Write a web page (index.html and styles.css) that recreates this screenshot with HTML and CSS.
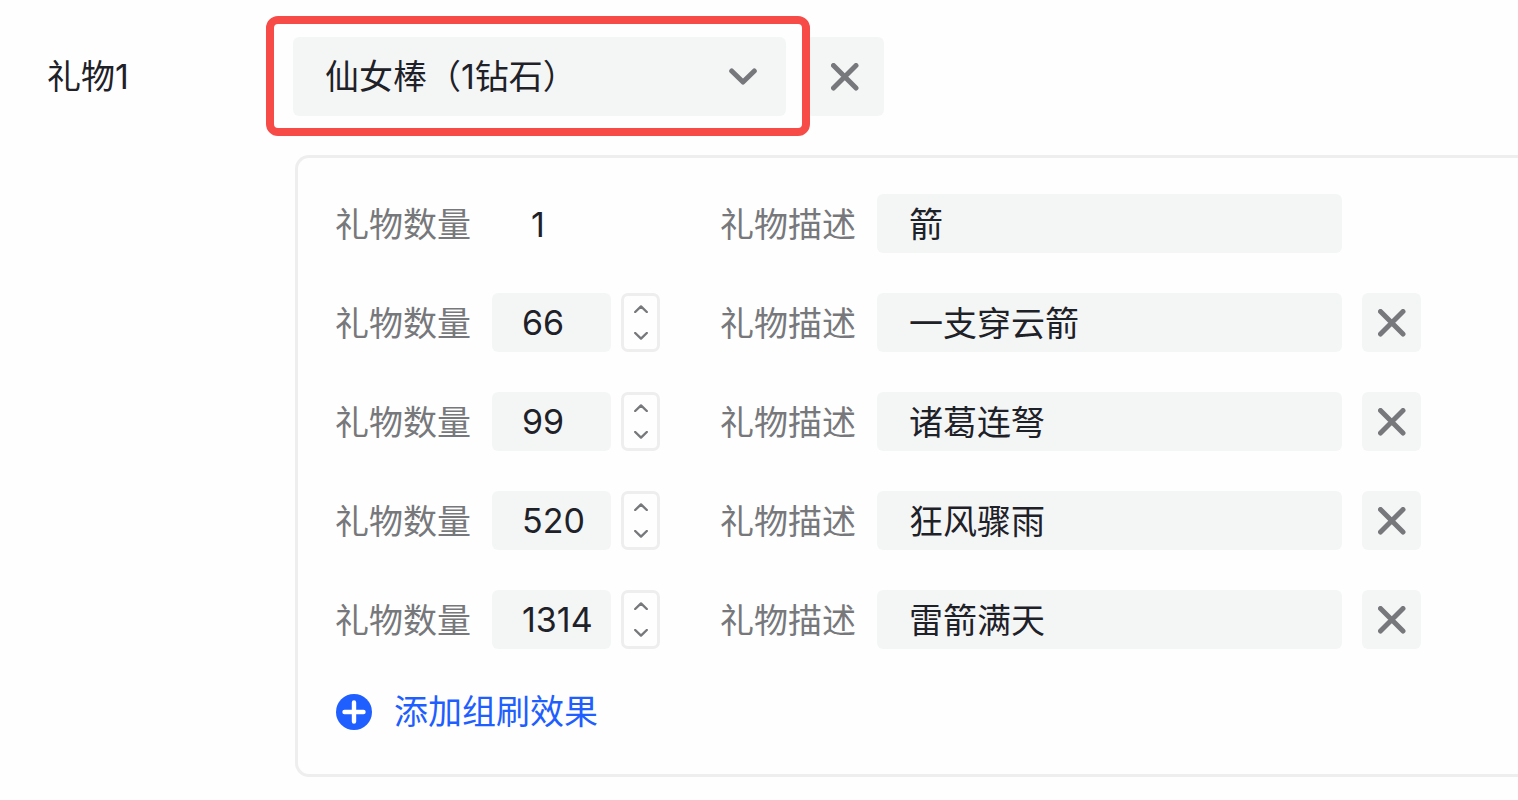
FILE: index.html
```html
<!DOCTYPE html>
<html lang="zh-CN">
<head>
    <meta charset="UTF-8">
    <meta name="viewport" content="width=device-width, initial-scale=1.0">
    <title>礼物设置</title>
    <link rel="stylesheet" href="styles.css">
</head>
<body>
    <!-- Shared icons -->
    <svg class="icon-defs" width="0" height="0" aria-hidden="true">
        <symbol id="icon-close" viewBox="0 0 28 28">
            <path d="M2.5 2.5 L25 25 M25 2.5 L2.5 25" fill="none" stroke="currentColor" stroke-width="5" stroke-linecap="round"/>
        </symbol>
        <symbol id="icon-up" viewBox="0 0 14 8">
            <path d="M1.2 7 L7 1.4 L12.8 7" fill="none" stroke="currentColor" stroke-width="2.4" stroke-linecap="round" stroke-linejoin="round"/>
        </symbol>
        <symbol id="icon-down" viewBox="0 0 14 8">
            <path d="M1.2 1 L7 6.6 L12.8 1" fill="none" stroke="currentColor" stroke-width="2.4" stroke-linecap="round" stroke-linejoin="round"/>
        </symbol>
    </svg>

    <form class="gift-form">
        <div class="gift-header">
            <label class="gift-title" for="gift">礼物1</label>
            <div class="gift-select">
                <select id="gift">
                    <option selected>仙女棒（1钻石）</option>
                </select>
                <svg class="chevron" viewBox="0 0 28 18" aria-hidden="true">
                    <path d="M2.7 3 L14 14 L25.3 3" fill="none" stroke="currentColor" stroke-width="5" stroke-linecap="round" stroke-linejoin="round"/>
                </svg>
            </div>
            <button type="button" class="remove-btn large" aria-label="删除礼物"><svg><use href="#icon-close"/></svg></button>
        </div>

        <div class="effect-panel">
            <div class="effect-row">
                <span class="field-label">礼物数量</span>
                <div class="count"><span class="count-fixed">1</span></div>
                <label class="field-label" for="desc1">礼物描述</label>
                <input type="text" class="desc" id="desc1" value="箭">
            </div>

            <div class="effect-row">
                <label class="field-label" for="count2">礼物数量</label>
                <div class="count">
                    <input type="number" id="count2" value="66">
                    <div class="stepper">
                        <button type="button" aria-label="增加"><svg><use href="#icon-up"/></svg></button>
                        <button type="button" aria-label="减少"><svg><use href="#icon-down"/></svg></button>
                    </div>
                </div>
                <label class="field-label" for="desc2">礼物描述</label>
                <input type="text" class="desc" id="desc2" value="一支穿云箭">
                <button type="button" class="remove-btn" aria-label="删除"><svg><use href="#icon-close"/></svg></button>
            </div>

            <div class="effect-row">
                <label class="field-label" for="count3">礼物数量</label>
                <div class="count">
                    <input type="number" id="count3" value="99">
                    <div class="stepper">
                        <button type="button" aria-label="增加"><svg><use href="#icon-up"/></svg></button>
                        <button type="button" aria-label="减少"><svg><use href="#icon-down"/></svg></button>
                    </div>
                </div>
                <label class="field-label" for="desc3">礼物描述</label>
                <input type="text" class="desc" id="desc3" value="诸葛连弩">
                <button type="button" class="remove-btn" aria-label="删除"><svg><use href="#icon-close"/></svg></button>
            </div>

            <div class="effect-row">
                <label class="field-label" for="count4">礼物数量</label>
                <div class="count">
                    <input type="number" id="count4" value="520">
                    <div class="stepper">
                        <button type="button" aria-label="增加"><svg><use href="#icon-up"/></svg></button>
                        <button type="button" aria-label="减少"><svg><use href="#icon-down"/></svg></button>
                    </div>
                </div>
                <label class="field-label" for="desc4">礼物描述</label>
                <input type="text" class="desc" id="desc4" value="狂风骤雨">
                <button type="button" class="remove-btn" aria-label="删除"><svg><use href="#icon-close"/></svg></button>
            </div>

            <div class="effect-row">
                <label class="field-label" for="count5">礼物数量</label>
                <div class="count">
                    <input type="number" id="count5" value="1314">
                    <div class="stepper">
                        <button type="button" aria-label="增加"><svg><use href="#icon-up"/></svg></button>
                        <button type="button" aria-label="减少"><svg><use href="#icon-down"/></svg></button>
                    </div>
                </div>
                <label class="field-label" for="desc5">礼物描述</label>
                <input type="text" class="desc" id="desc5" value="雷箭满天">
                <button type="button" class="remove-btn" aria-label="删除"><svg><use href="#icon-close"/></svg></button>
            </div>

            <button type="button" class="add-btn">
                <svg viewBox="0 0 36 36" aria-hidden="true">
                    <circle cx="18" cy="18" r="18" fill="currentColor"/>
                    <path d="M18 8.5 V27.5 M8.5 18 H27.5" stroke="#fff" stroke-width="4.4" stroke-linecap="round"/>
                </svg>
                添加组刷效果
            </button>
        </div>
    </form>
</body>
</html>
```
FILE: styles.css
```css
* {
    box-sizing: border-box;
}

body {
    margin: 0;
    background: #fefefe;
    color: #1f2128;
    font-family: Inter, "Noto Sans CJK SC", sans-serif;
    font-size: 34px;
    line-height: 40px;
}

input, select, button {
    margin: 0;
    padding: 0;
    border: none;
    border-radius: 6px;
    background: #f4f6f6;
    color: inherit;
    font: inherit;
}

button {
    cursor: pointer;
}

svg {
    display: block;
}

.icon-defs {
    position: absolute;
}

.gift-form {
    padding: 37px 0 24px 47px;
}

/* Gift picker */
.gift-header {
    display: flex;
    align-items: center;
}

.gift-title {
    width: 246px;
}

.gift-select {
    position: relative;
    flex: 0 1 493px;
    margin-right: 20px;
}

.gift-select select {
    display: block;
    width: 100%;
    height: 79px;
    padding: 0 32px;
    appearance: none;
}

.gift-select .chevron {
    position: absolute;
    top: 31px;
    right: 29px;
    width: 28px;
    height: 18px;
    color: #77787b;
    pointer-events: none;
}

/* Red highlight around the picker */
.gift-select::after {
    content: "";
    position: absolute;
    inset: -21px -24px -20px -27px;
    border: 8px solid #f74b48;
    border-radius: 12px;
    pointer-events: none;
}

.remove-btn {
    display: grid;
    place-items: center;
    flex: none;
    width: 59px;
    height: 59px;
    margin-left: 20px;
    color: #77787b;
}

.remove-btn.large {
    width: 78px;
    height: 79px;
    margin-left: 0;
}

.remove-btn svg {
    width: 28px;
    height: 28px;
}

/* Combo effects */
.effect-panel {
    display: flex;
    flex-direction: column;
    gap: 40px;
    margin: 39px 0 0 248px;
    padding: 36px 40px 40px 37px;
    border: 3px solid #eee;
    border-right: none;
    border-radius: 14px 0 0 14px;
}

.effect-row {
    display: flex;
    align-items: center;
    height: 59px;
}

.field-label {
    flex: none;
    width: 157px;
    padding-top: 2px;
    color: #77787b;
}

.count {
    display: flex;
    gap: 10px;
    flex: none;
    width: 228px;
}

.count input {
    width: 119px;
    height: 59px;
    padding-left: 30px;
    appearance: textfield;
}

.count input::-webkit-inner-spin-button {
    display: none;
}

.count-fixed {
    padding: 2px 0 0 39px;
}

.stepper {
    display: flex;
    flex-direction: column;
    width: 39px;
    height: 59px;
    border: 3px solid #eee;
    border-radius: 7px;
}

.stepper button {
    display: grid;
    place-items: center;
    flex: 1;
    background: none;
    color: #77787b;
}

.stepper svg {
    width: 14px;
    height: 8px;
}

.desc {
    flex: 0 1 465px;
    min-width: 0;
    height: 59px;
    padding: 0 32px 2px;
}

.add-btn {
    display: flex;
    align-items: center;
    align-self: flex-start;
    gap: 22px;
    padding: 1px 0 0 1px;
    background: none;
    color: #1f5eff;
    line-height: 44px;
}

.add-btn svg {
    width: 36px;
    height: 36px;
}
```
